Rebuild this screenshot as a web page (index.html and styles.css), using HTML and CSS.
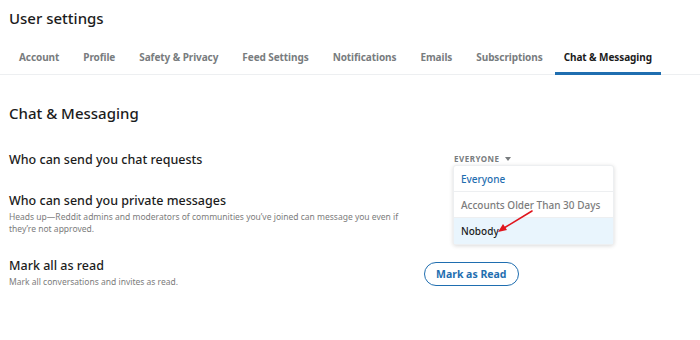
FILE: index.html
```html
<!DOCTYPE html>
<html lang="en">
<head>
  <meta charset="UTF-8">
  <meta name="viewport" content="width=device-width, initial-scale=1.0">
  <title>User settings</title>
  <link rel="stylesheet" href="styles.css">
</head>
<body>
  <h1 class="page-title">User settings</h1>

  <nav class="tabs">
    <a class="tab">Account</a>
    <a class="tab">Profile</a>
    <a class="tab">Safety &amp; Privacy</a>
    <a class="tab">Feed Settings</a>
    <a class="tab">Notifications</a>
    <a class="tab">Emails</a>
    <a class="tab">Subscriptions</a>
    <a class="tab active">Chat &amp; Messaging</a>
  </nav>

  <div class="content">
    <h2 class="section-title">Chat &amp; Messaging</h2>

    <div class="setting setting-chat">
      <div class="setting-text">
        <h3>Who can send you chat requests</h3>
      </div>
      <div class="setting-control">
        <div class="dropdown">
          <button class="dropdown-toggle">EVERYONE <span class="caret"></span></button>
          <ul class="dropdown-menu">
            <li class="selected">Everyone</li>
            <li>Accounts Older Than 30 Days</li>
            <li class="hover">Nobody</li>
          </ul>
          <!-- red annotation arrow -->
          <svg class="arrow" width="40" height="26" viewBox="0 0 40 26">
            <line x1="37" y1="2" x2="9" y2="19" stroke="#e0161e" stroke-width="1.6" stroke-linecap="round"/>
            <polygon points="3,23 8,15 12,21" fill="#e0161e"/>
          </svg>
        </div>
      </div>
    </div>

    <div class="setting">
      <div class="setting-text">
        <h3>Who can send you private messages</h3>
        <p>Heads up—Reddit admins and moderators of communities you’ve joined can message you even if they’re not approved.</p>
      </div>
    </div>

    <div class="setting setting-read">
      <div class="setting-text">
        <h3>Mark all as read</h3>
        <p>Mark all conversations and invites as read.</p>
      </div>
      <div class="setting-control">
        <button class="mark-button">Mark as Read</button>
      </div>
    </div>
  </div>
</body>
</html>
```

FILE: styles.css
```css
body {
  font-family: "Noto Sans", Arial, sans-serif;
  background-color: #fff;
  color: #1c1c1c;
  margin: 0;
  padding: 0;
}

.page-title {
  font-size: 15px;
  font-weight: 500;
  margin: 0;
  padding: 8px 0 0 9px;
  line-height: 20px;
}

.tabs {
  display: flex;
  margin-top: 20px;
  padding-left: 7px;
  border-bottom: 1px solid #edeff1;
}

.tab {
  font-size: 10px;
  font-weight: 700;
  letter-spacing: -0.08px;
  color: #787c7e;
  white-space: nowrap;
  padding: 0 12px;
  line-height: 16px;
  height: 27px;
  box-sizing: border-box;
  padding-top: 1px;
  border-bottom: 3px solid transparent;
  margin-bottom: -1px;
}

.tab.active {
  color: #1c1c1c;
  padding: 1px 9px 0 9px;
  border-bottom-color: #1f6eb0;
}

.content {
  padding: 0 9px;
}

.section-title {
  font-size: 15px;
  font-weight: 500;
  margin: 28px 0 0 0;
  line-height: 20px;
}

.setting {
  display: grid;
  grid-template-columns: 415px auto;
  align-items: start;
}

.setting-chat {
  margin-top: 28px;
}

.setting-text h3 {
  font-size: 12.5px;
  font-weight: 500;
  margin: 0;
  line-height: 18px;
}

.setting-text p {
  font-size: 8.5px;
  color: #7c7c7c;
  margin: 1px 0 0 0;
  line-height: 12px;
  max-width: 392px;
}

.setting + .setting {
  margin-top: 23px;
}

.setting-read {
  align-items: center;
}

.setting-read.setting {
  margin-top: 22px;
}

.setting-control {
  padding-top: 2px;
}

.dropdown {
  position: relative;
  margin-left: 30px;
  width: 159px;
}

.dropdown-toggle {
  font-family: inherit;
  background: none;
  border: none;
  padding: 0;
  font-size: 8px;
  font-weight: 700;
  letter-spacing: 0.5px;
  color: #787c7e;
  line-height: 12px;
  display: flex;
  align-items: center;
  gap: 5px;
}

.caret {
  width: 0;
  height: 0;
  border-left: 3.5px solid transparent;
  border-right: 3.5px solid transparent;
  border-top: 4px solid #787c7e;
}

.dropdown-menu {
  position: absolute;
  top: 12px;
  left: -1px;
  width: 159px;
  list-style: none;
  margin: 0;
  padding: 0;
  background-color: #fff;
  border: 1px solid #edeff1;
  border-radius: 3px;
  box-shadow: 0 1px 4px rgba(0, 0, 0, 0.15);
  z-index: 2;
}

.dropdown-menu li {
  font-size: 10px;
  font-weight: 500;
  color: #7c7c7c;
  white-space: nowrap;
  line-height: 14px;
  padding: 6px 7px 5px 7px;
  border-bottom: 1px solid #edeff1;
}

.dropdown-menu li:last-child {
  border-bottom: none;
  padding-bottom: 6px;
}

.dropdown-menu .selected {
  color: #1f6eb0;
}

.dropdown-menu .hover {
  background-color: #e9f5fd;
  color: #1c1c1c;
}

.arrow {
  position: absolute;
  top: 56px;
  left: 41px;
  z-index: 3;
}

.mark-button {
  font-family: inherit;
  font-size: 10.5px;
  font-weight: 700;
  color: #1f6eb0;
  background: #fff;
  border: 1px solid #1f6eb0;
  border-radius: 12px;
  padding: 4px 11px;
  line-height: 14px;
}
```
